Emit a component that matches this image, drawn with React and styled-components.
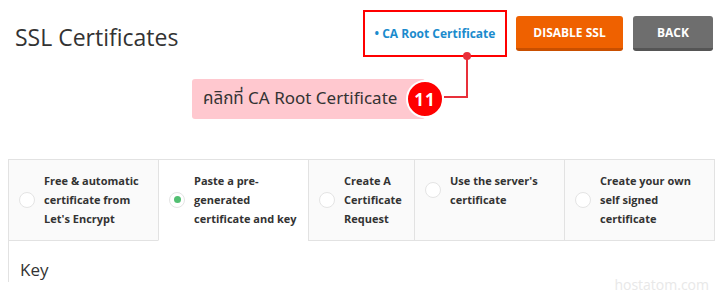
import React from "react";
import styled, { createGlobalStyle } from "styled-components";

const GlobalStyle = createGlobalStyle`
  html, body {
    margin: 0;
    padding: 0;
    background: #ffffff;
  }
  body {
    font-family: "Open Sans", "Noto Sans", sans-serif;
    color: #333333;
  }
  * {
    box-sizing: border-box;
  }
`;

const Page = styled.div`
  position: relative;
  width: 720px;
  height: 300px;
  overflow: hidden;
`;

const Header = styled.div`
  display: flex;
  align-items: center;
  height: 57px;
  padding: 10px 7px 0 15px;
`;

const Title = styled.h1`
  flex: 1;
  margin: 6px 0 0 0;
  font-size: 23px;
  font-weight: 500;
  color: #333333;
`;

const Actions = styled.div`
  display: flex;
  align-items: center;
  gap: 9px;
`;

const Highlight = styled.div`
  display: flex;
  align-items: center;
  justify-content: center;
  width: 144px;
  height: 47px;
  border: 2px solid #ff0000;
`;

const RootLink = styled.a`
  font-size: 12px;
  font-weight: 700;
  color: #1b8bcd;
  text-decoration: none;
`;

const Button = styled.button`
  width: ${(p) => p.$width}px;
  height: 35px;
  margin-left: ${(p) => p.$gap || 0}px;
  border: none;
  border-bottom: 3px solid ${(p) => p.$shade};
  border-radius: 3px;
  background: ${(p) => p.$bg};
  color: #ffffff;
  font-family: "Open Sans", sans-serif;
  font-size: 12px;
  font-weight: 700;
  padding: 0;
`;

const Callout = styled.div`
  position: absolute;
  left: 192px;
  top: 79px;
  width: 233px;
  height: 40px;
  display: flex;
  align-items: center;
  padding-left: 11px;
  background: #ffc8cf;
  border-radius: 3px;
  font-family: "Noto Sans Thai", "Noto Sans", "DejaVu Sans", sans-serif;
  font-size: 17px;
  color: #333333;
`;

const Badge = styled.div`
  position: absolute;
  left: 406px;
  top: 80px;
  width: 38px;
  height: 38px;
  border-radius: 50%;
  border: 2px solid #ffffff;
  background: #ff0000;
  color: #ffffff;
  display: flex;
  align-items: center;
  justify-content: center;
  font-family: "Open Sans", sans-serif;
  font-size: 17px;
  font-weight: 700;
  letter-spacing: 1px;
`;

const Connector = styled.svg`
  position: absolute;
  left: 440px;
  top: 50px;
`;

const Tabs = styled.div`
  display: flex;
  margin: 102px 0 0 8px;
`;

const Tab = styled.div`
  width: ${(p) => p.$width}px;
  height: 82px;
  padding: 11px 6px 0 10px;
  background: ${(p) => (p.$active ? "#ffffff" : "#fafafa")};
  border-top: 1px solid #e2e2e2;
  border-left: 1px solid #e2e2e2;
  border-right: ${(p) => (p.$last ? "1px solid #e2e2e2" : "none")};
  border-bottom: 1px solid ${(p) => (p.$active ? "#ffffff" : "#e2e2e2")};
`;

const TabRow = styled.div`
  display: flex;
  align-items: center;
  gap: 9px;
`;

const Radio = styled.span`
  flex: none;
  width: 16px;
  height: 16px;
  border-radius: 50%;
  border: 1px solid #e4e4e4;
  background: #ffffff;
  display: flex;
  align-items: center;
  justify-content: center;

  &::after {
    content: "";
    width: 7px;
    height: 7px;
    border-radius: 50%;
    background: ${(p) => (p.$checked ? "#52bf72" : "transparent")};
  }
`;

const TabLabel = styled.span`
  flex: 1;
  font-size: 11px;
  font-weight: 700;
  line-height: 19px;
  color: #333333;
`;

const Panel = styled.div`
  position: relative;
  margin-left: 8px;
  height: 41px;
  padding: 19px 0 0 11px;
  border-left: 1px solid #e2e2e2;
`;

const PanelTitle = styled.h2`
  margin: 0;
  font-size: 17px;
  line-height: 20px;
  font-weight: 400;
  color: #333333;
`;

const Watermark = styled.div`
  position: absolute;
  right: 11px;
  bottom: 6px;
  font-size: 14px;
  color: #e8e8e8;
`;

const tabs = [
  { label: "Free & automatic certificate from Let's Encrypt", width: 150 },
  { label: "Paste a pre-generated certificate and key", width: 150, active: true },
  { label: "Create A Certificate Request", width: 106 },
  { label: "Use the server's certificate", width: 150 },
  { label: "Create your own self signed certificate", width: 151, last: true },
];

export default function App() {
  return (
    <Page>
      <GlobalStyle />
      <Header>
        <Title>SSL Certificates</Title>
        <Actions>
          <Highlight>
            <RootLink href="#">• CA Root Certificate</RootLink>
          </Highlight>
          <Button $width={107} $bg="#ef6100" $shade="#c94f00">
            DISABLE SSL
          </Button>
          <Button $width={80} $gap={1} $bg="#6e6e6e" $shade="#555555">
            BACK
          </Button>
        </Actions>
      </Header>

      <Callout>คลิกที่ CA Root Certificate</Callout>
      <Connector width="34" height="54" viewBox="0 0 34 54">
        <path d="M4 47 H27 V6" fill="none" stroke="#e8303a" strokeWidth="2" />
        <circle cx="27" cy="6" r="4" fill="#e8303a" />
      </Connector>
      <Badge>11</Badge>

      <Tabs>
        {tabs.map((t) => (
          <Tab key={t.label} $width={t.width} $active={t.active} $last={t.last}>
            <TabRow>
              <Radio $checked={t.active} />
              <TabLabel>{t.label}</TabLabel>
            </TabRow>
          </Tab>
        ))}
      </Tabs>
      <Panel>
        <PanelTitle>Key</PanelTitle>
      </Panel>
      <Watermark>hostatom.com</Watermark>
    </Page>
  );
}
